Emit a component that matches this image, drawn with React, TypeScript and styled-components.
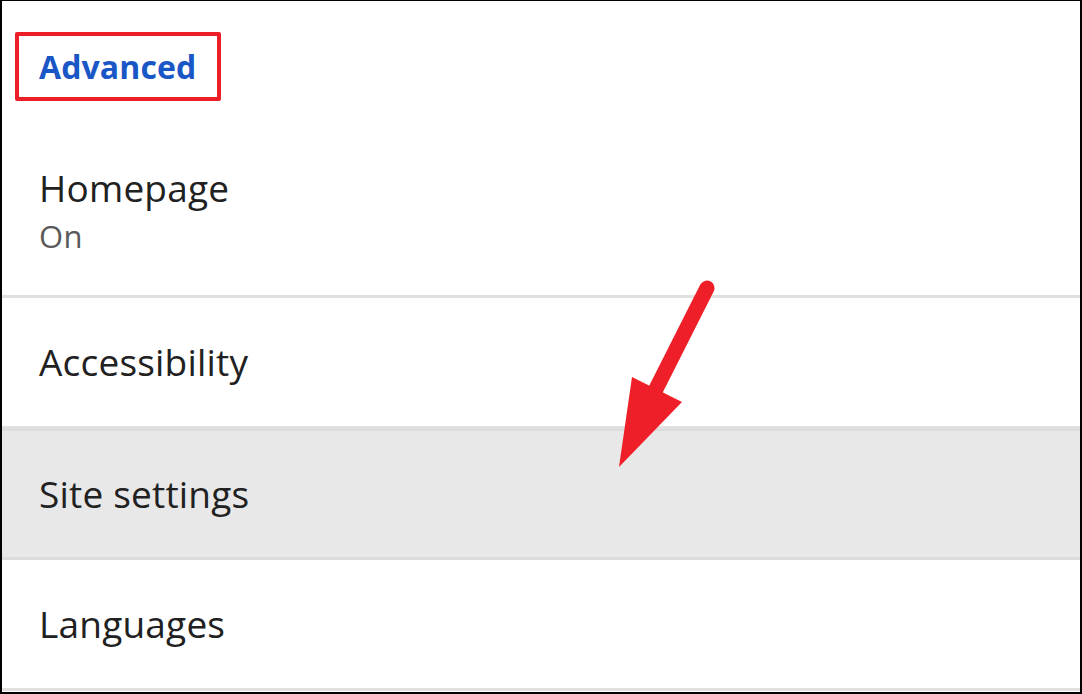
import styled, { createGlobalStyle } from 'styled-components';

const GlobalStyle = createGlobalStyle`
  html, body {
    margin: 0;
    padding: 0;
    background: #ffffff;
  }
  * {
    box-sizing: border-box;
  }
`;

const Frame = styled.div`
  position: relative;
  width: 1082px;
  height: 694px;
  border: 2px solid #000;
  border-top-width: 1px;
  background: #fff;
  font-family: 'Open Sans', 'Noto Sans', sans-serif;
  color: #222;
  overflow: hidden;
  display: flex;
  flex-direction: column;
`;

const Header = styled.div`
  height: 129px;
  padding: 31px 0 0 13px;
`;

const Highlight = styled.div`
  display: inline-flex;
  align-items: center;
  width: 206px;
  height: 69px;
  border: 4px solid #ec1f28;
  border-radius: 2px;
  padding-left: 20px;
`;

const SectionTitle = styled.span`
  font-size: 32px;
  font-weight: 700;
  color: #1a57c6;
  letter-spacing: 0.1px;
`;

const Row = styled.div<{ $active?: boolean; $tall?: boolean }>`
  display: flex;
  flex-direction: column;
  justify-content: ${(p) => (p.$tall ? 'flex-start' : 'center')};
  height: ${(p) => (p.$tall ? '168px' : '131px')};
  padding: ${(p) => (p.$tall ? '36px 0 0 37px' : '0 0 0 37px')};
  background: ${(p) => (p.$active ? '#e8e8e8' : '#fff')};
  border-bottom: 3px solid ${(p) => (p.$active ? '#dcdcdc' : '#e0e0e0')};
  ${(p) => (p.$active ? 'border-top: 2px solid #dcdcdc;' : '')}
`;

const Title = styled.div`
  font-size: 37px;
  line-height: 44px;
  color: #212121;
  letter-spacing: 0.2px;
`;

const Summary = styled.div`
  font-size: 31px;
  line-height: 52px;
  color: #595959;
  letter-spacing: 0.3px;
`;

const Arrow = styled.svg`
  position: absolute;
  left: 0;
  top: 0;
  pointer-events: none;
`;

export default function App() {
  return (
    <>
      <GlobalStyle />
      <Frame>
        <Header>
          <Highlight>
            <SectionTitle>Advanced</SectionTitle>
          </Highlight>
        </Header>
        <Row $tall>
          <Title>Homepage</Title>
          <Summary>On</Summary>
        </Row>
        <Row>
          <Title>Accessibility</Title>
        </Row>
        <Row $active>
          <Title>Site settings</Title>
        </Row>
        <Row>
          <Title>Languages</Title>
        </Row>
        <Arrow width="1082" height="694" viewBox="0 0 1082 694">
          <line x1="705" y1="287" x2="652" y2="392" stroke="#ee1f28" strokeWidth="15" strokeLinecap="round" />
          <polygon points="630,376 680,401 617,466" fill="#ee1f28" />
        </Arrow>
      </Frame>
    </>
  );
}
